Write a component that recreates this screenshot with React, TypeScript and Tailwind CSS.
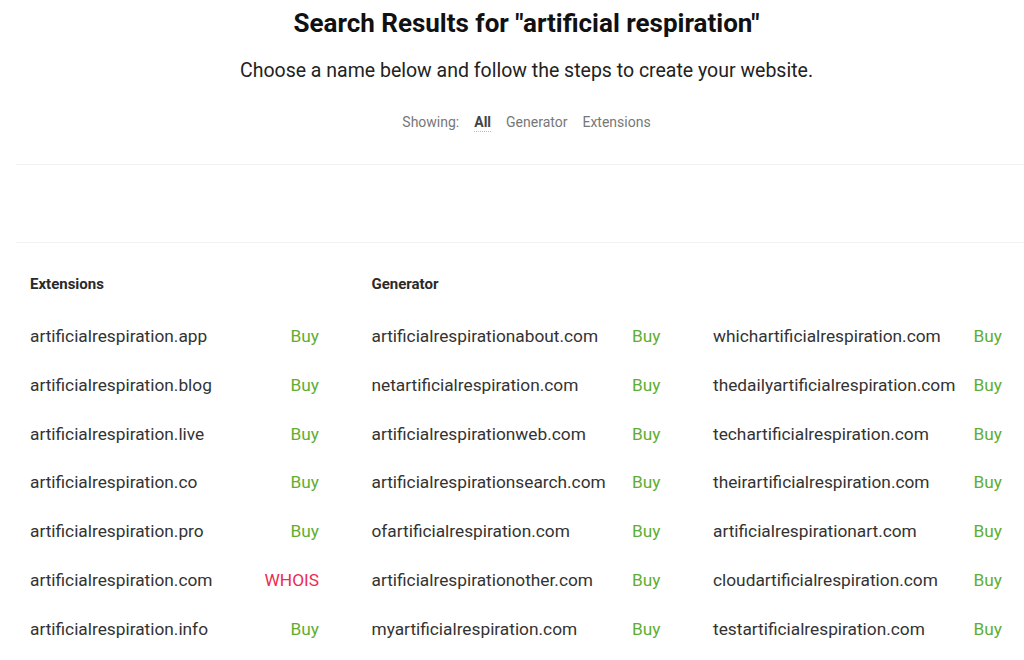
const extensions: { name: string; status: "buy" | "whois" }[] = [
  { name: "artificialrespiration.app", status: "buy" },
  { name: "artificialrespiration.blog", status: "buy" },
  { name: "artificialrespiration.live", status: "buy" },
  { name: "artificialrespiration.co", status: "buy" },
  { name: "artificialrespiration.pro", status: "buy" },
  { name: "artificialrespiration.com", status: "whois" },
  { name: "artificialrespiration.info", status: "buy" },
];

const generator1 = [
  "artificialrespirationabout.com",
  "netartificialrespiration.com",
  "artificialrespirationweb.com",
  "artificialrespirationsearch.com",
  "ofartificialrespiration.com",
  "artificialrespirationother.com",
  "myartificialrespiration.com",
];

const generator2 = [
  "whichartificialrespiration.com",
  "thedailyartificialrespiration.com",
  "techartificialrespiration.com",
  "theirartificialrespiration.com",
  "artificialrespirationart.com",
  "cloudartificialrespiration.com",
  "testartificialrespiration.com",
];

const Row = ({ name, status }: { name: string; status: "buy" | "whois" }) => (
  <div className="flex h-[48.8px] items-center justify-between">
    <span className="text-[17.3px] text-[#333]">{name}</span>
    {status === "buy" ? (
      <span className="text-[17.3px] text-[#5fae32]">Buy</span>
    ) : (
      <span className="text-[17.3px] text-[#ec2c50]">WHOIS</span>
    )}
  </div>
);

const Column = ({ title, children }: { title: string; children: React.ReactNode }) => (
  <div className="flex w-[289px] flex-col">
    <h3 className="h-5 text-[15px] font-bold leading-5 text-[#2a2a2a]">{title}</h3>
    <div className="mt-[18.6px] flex flex-col">{children}</div>
  </div>
);

const App = () => {
  return (
    <div className="h-[660px] w-[1024px] overflow-hidden bg-white font-['Roboto',sans-serif]">
      <div className="flex flex-col items-center pl-[29px] pt-[7px]">
        <h1 className="text-[26px] font-bold leading-8 text-[#111]">Search Results for "artificial respiration"</h1>
        <p className="mt-[18px] text-[19.5px] leading-7 text-[#222]">Choose a name below and follow the steps to create your website.</p>
        <div className="mt-[27px] flex items-center gap-[15px] text-[14px] leading-5 text-[#777]">
          <span>Showing:</span>
          <span className="border-b border-dotted border-[#bbb] font-bold leading-[18px] text-[#444]">All</span>
          <span>Generator</span>
          <span>Extensions</span>
        </div>
      </div>
      <div className="ml-4 mt-[32px] h-px bg-[#f2f2f2]" />
      <div className="ml-4 mt-[77px] h-px bg-[#f2f2f2]" />
      <div className="mt-[31px] flex gap-[52.5px] pl-[30px]">
        <Column title="Extensions">
          {extensions.map((e) => (
            <Row key={e.name} name={e.name} status={e.status} />
          ))}
        </Column>
        <Column title="Generator">
          {generator1.map((n) => (
            <Row key={n} name={n} status="buy" />
          ))}
        </Column>
        <Column title="">
          {generator2.map((n) => (
            <Row key={n} name={n} status="buy" />
          ))}
        </Column>
      </div>
    </div>
  );
};

export default App;
